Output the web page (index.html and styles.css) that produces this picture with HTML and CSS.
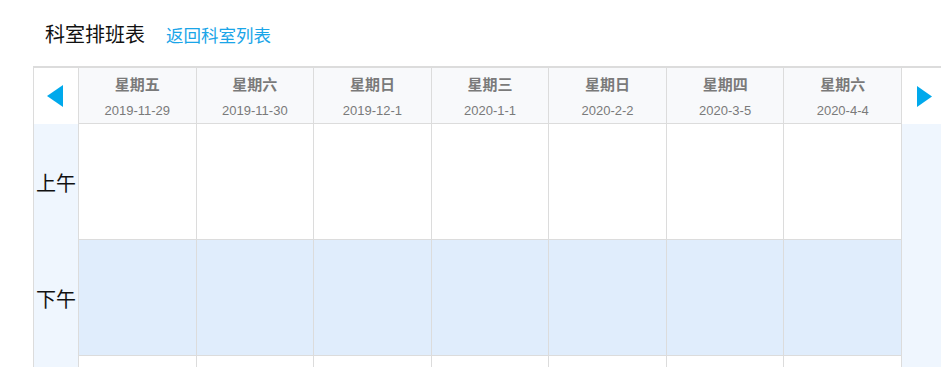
FILE: index.html
```html
<!DOCTYPE html>
<html lang="zh-CN">
<head>
    <meta charset="UTF-8">
    <title>科室排班表</title>
    <link rel="stylesheet" href="styles.css">
</head>
<body>
    <div class="page-head">
        <h1>科室排班表</h1>
        <a class="back-link" href="#">返回科室列表</a>
    </div>

    <div class="schedule">
        <!-- 左侧：上一页 + 时段 -->
        <div class="side side-left">
            <div class="side-head">
                <svg class="arrow" width="16" height="22" viewBox="0 0 16 22"><polygon points="16,0 16,22 0,11" fill="#00a9ec"/></svg>
            </div>
            <div class="side-body">
                <div class="period">上午</div>
                <div class="period">下午</div>
            </div>
        </div>

        <div class="grid">
            <div class="day"><span class="week">星期五</span><span class="date">2019-11-29</span></div>
            <div class="day"><span class="week">星期六</span><span class="date">2019-11-30</span></div>
            <div class="day"><span class="week">星期日</span><span class="date">2019-12-1</span></div>
            <div class="day"><span class="week">星期三</span><span class="date">2020-1-1</span></div>
            <div class="day"><span class="week">星期日</span><span class="date">2020-2-2</span></div>
            <div class="day"><span class="week">星期四</span><span class="date">2020-3-5</span></div>
            <div class="day"><span class="week">星期六</span><span class="date">2020-4-4</span></div>

            <div class="cell"></div><div class="cell"></div><div class="cell"></div><div class="cell"></div><div class="cell"></div><div class="cell"></div><div class="cell"></div>
            <div class="cell pm"></div><div class="cell pm"></div><div class="cell pm"></div><div class="cell pm"></div><div class="cell pm"></div><div class="cell pm"></div><div class="cell pm"></div>
            <div class="cell"></div><div class="cell"></div><div class="cell"></div><div class="cell"></div><div class="cell"></div><div class="cell"></div><div class="cell"></div>
        </div>

        <!-- 右侧：下一页 -->
        <div class="side side-right">
            <div class="side-head">
                <svg class="arrow" width="15" height="21" viewBox="0 0 15 21"><polygon points="0,0 0,21 15,10.5" fill="#00a9ec"/></svg>
            </div>
            <div class="side-body"></div>
        </div>
    </div>
</body>
</html>
```

FILE: styles.css
```css
/* 基础 */
body {
    margin: 0;
    font-family: "Liberation Sans", "Noto Sans CJK SC", sans-serif;
    color: #222;
    background: #fff;
    overflow: hidden;
}

/* 标题栏 */
.page-head {
    height: 66px;
    box-sizing: border-box;
    padding: 22px 0 0 45px;
    display: flex;
    align-items: baseline;
    gap: 21px;
}

.page-head h1 {
    margin: 0;
    font-size: 20px;
    font-weight: normal;
    line-height: 24px;
    color: #111;
}

.back-link {
    font-size: 17.5px;
    color: #1aa5e8;
    text-decoration: none;
}

/* 排班表 */
.schedule {
    display: flex;
    margin-left: 33px;
    border-top: 2px solid #dcdcdc;
    border-left: 1px solid #dcdcdc;
}

.side {
    display: flex;
    flex-direction: column;
}

.side-left {
    width: 44px;
}

.side-right {
    flex: 1;
    border-left: 1px solid #dcdcdc;
}

.side-head {
    height: 56px;
    display: flex;
    align-items: center;
    justify-content: center;
    background: #fff;
}

.side-left .side-head {
    padding-right: 2px;
}

.side-right .side-head {
    justify-content: flex-start;
    padding-left: 15px;
}

.side-body {
    flex: 1;
    background: #eff6fe;
}

.period {
    height: 116px;
    display: flex;
    align-items: center;
    justify-content: center;
    font-size: 20px;
    color: #111;
}

.grid {
    width: 823px;
    display: grid;
    grid-template-columns: repeat(7, 1fr);
}

.day {
    height: 56px;
    box-sizing: border-box;
    padding-top: 7px;
    display: flex;
    flex-direction: column;
    align-items: center;
    background: #f8f9fb;
    border-left: 1px solid #dcdcdc;
    border-bottom: 1px solid #dcdcdc;
}

.week {
    font-size: 15px;
    font-weight: bold;
    line-height: 20px;
    color: #7a7a7a;
}

.date {
    margin-top: 6px;
    font-size: 13px;
    line-height: 20px;
    color: #7a7a7a;
}

.cell {
    height: 116px;
    box-sizing: border-box;
    border-left: 1px solid #dcdcdc;
    border-bottom: 1px solid #dcdcdc;
    background: #fff;
}

.cell.pm {
    background: #e0edfc;
}
```
